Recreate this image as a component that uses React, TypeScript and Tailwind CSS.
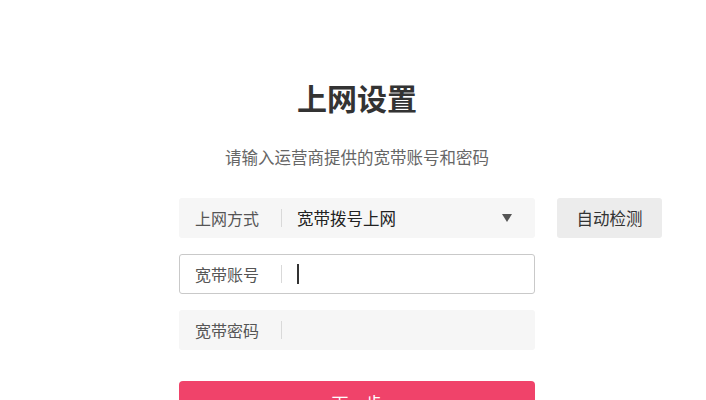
const font = { fontFamily: '"Noto Sans CJK SC", "Noto Sans", sans-serif' };

function Field({
  label,
  children,
  focused,
}: {
  label: string;
  children?: React.ReactNode;
  focused?: boolean;
}) {
  return (
    <div
      className={
        "flex h-[40px] w-[356px] items-center rounded-[3px] border " +
        (focused ? "border-[#c9c9c9] bg-white" : "border-transparent bg-[#f6f6f6]")
      }
    >
      <span className="block w-[101px] shrink-0 pl-[15px] text-[16px] leading-none text-[#555]">{label}</span>
      <span className="h-[18px] w-px shrink-0 bg-[#d9d9d9]" />
      <div className="flex flex-1 items-center pl-[15px] pr-[22px]">{children}</div>
    </div>
  );
}

export default function App() {
  return (
    <div className="h-[400px] w-[706px] overflow-hidden bg-white" style={font}>
      <div className="pl-[179px] pt-[77px]">
        <div className="flex w-[356px] flex-col items-center">
          <h1 className="text-[30px] font-bold leading-[40px] text-[#333]">上网设置</h1>
          <p className="mt-[29px] text-[16.5px] leading-[22px] text-[#666]">请输入运营商提供的宽带账号和密码</p>
        </div>

        <div className="mt-[30px] flex flex-col gap-[16px]">
          <div className="flex items-center gap-[22px]">
            <Field label="上网方式">
              <span className="flex-1 text-[16.5px] leading-none text-[#222]">宽带拨号上网</span>
              <span className="h-0 w-0 border-x-[5px] border-t-[8px] border-x-transparent border-t-[#555]" />
            </Field>
            <button className="h-[40px] w-[105px] rounded-[3px] bg-[#ececec] text-[16.5px] text-[#333]">
              自动检测
            </button>
          </div>
          <Field label="宽带账号" focused>
            <span className="h-[20px] w-[2px] bg-[#333]" />
          </Field>
          <Field label="宽带密码" />
        </div>

        <button className="mt-[31px] h-[44px] w-[356px] rounded-[4px] bg-[#f0436a] text-[17px] text-white">
          下一步
        </button>
      </div>
    </div>
  );
}
